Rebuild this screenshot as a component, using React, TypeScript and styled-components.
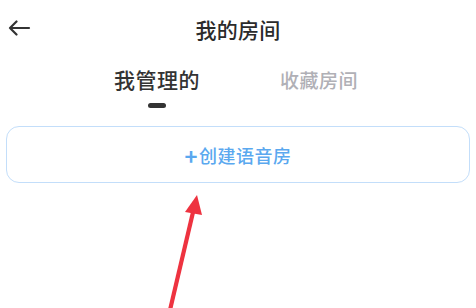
import React from 'react';
import styled, { createGlobalStyle } from 'styled-components';

const GlobalStyle = createGlobalStyle`
	html, body {
		margin: 0;
		padding: 0;
		background: #ffffff;
	}
	body {
		font-family: "Noto Sans CJK SC", "Noto Sans", sans-serif;
	}
`;

export default function App() {
	return (
		<Page>
			<GlobalStyle />
			<Header>
				<BackButton aria-label="返回">
					<svg width="24" height="16" viewBox="0 0 24 16" fill="none">
						<path
							d="M22 8H3M9.5 1.5L3 8l6.5 6.5"
							stroke="#333"
							strokeWidth="2.2"
							strokeLinecap="round"
							strokeLinejoin="round"
						/>
					</svg>
				</BackButton>
				<Title>我的房间</Title>
			</Header>
			<Tabs>
				<Tab active>
					我管理的
					<Indicator />
				</Tab>
				<Tab>收藏房间</Tab>
			</Tabs>
			<CreateButton>
				<Plus>+</Plus>创建语音房
			</CreateButton>
			{/* red annotation arrow laid over the page */}
			<Pointer width="476" height="308" viewBox="0 0 476 308">
				<line x1="170" y1="310" x2="194" y2="208" stroke="#ee3340" strokeWidth="4.2" />
				<polygon points="197,195 185,212 202,215" fill="#ee3340" />
			</Pointer>
		</Page>
	);
}

const Page = styled.div`
	position: relative;
	width: 476px;
	height: 308px;
	overflow: hidden;
	background: #fff;
`;

const Header = styled.div`
	position: relative;
	display: flex;
	align-items: center;
	justify-content: center;
	height: 58px;
`;

const BackButton = styled.button`
	position: absolute;
	left: 7px;
	top: 20px;
	display: flex;
	align-items: center;
	padding: 0;
	border: none;
	background: none;
`;

const Title = styled.h1`
	margin: 0;
	font-size: 21px;
	font-weight: 500;
	color: #2b2b2b;
	letter-spacing: 0.3px;
`;

const Tabs = styled.div`
	display: flex;
	justify-content: center;
	height: 56px;
`;

const Tab = styled.div<{ active?: boolean }>`
	position: relative;
	width: 162px;
	display: flex;
	justify-content: center;
	padding-top: ${(p) => (p.active ? '11px' : '12px')};
	font-size: ${(p) => (p.active ? '21px' : '19px')};
	line-height: 1;
	font-weight: 500;
	color: ${(p) => (p.active ? '#333333' : '#b0b0b6')};
	letter-spacing: 0.5px;
`;

const Indicator = styled.span`
	position: absolute;
	left: 72px;
	top: 45px;
	width: 18px;
	height: 5px;
	border-radius: 3px;
	background: #333;
`;

const CreateButton = styled.div`
	margin: 12px 6px 0 6px;
	height: 55px;
	border: 1.5px solid #c3defa;
	border-radius: 13px;
	display: flex;
	align-items: center;
	justify-content: center;
	font-size: 18px;
	font-weight: 500;
	color: #5aa8ef;
	letter-spacing: 0.5px;
`;

const Plus = styled.span`
	font-size: 22px;
	font-weight: 700;
	margin-right: 1px;
	line-height: 1;
`;

const Pointer = styled.svg`
	position: absolute;
	left: 0;
	top: 0;
	pointer-events: none;
`;
